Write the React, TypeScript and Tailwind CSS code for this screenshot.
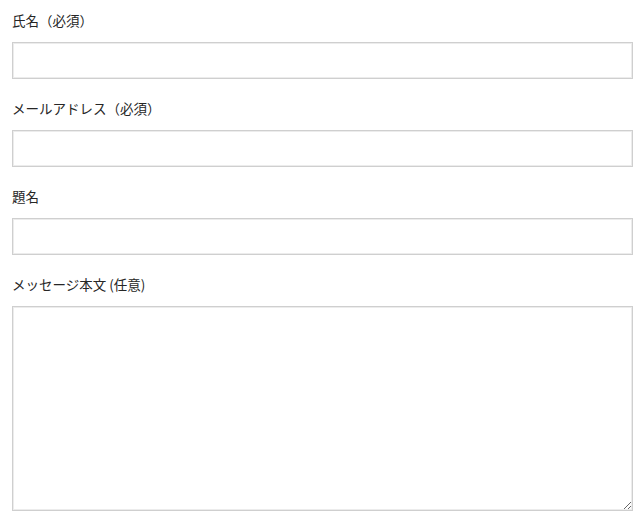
const fields = [
  { label: "氏名（必須）", type: "text" },
  { label: "メールアドレス（必須）", type: "email" },
  { label: "題名", type: "text" },
];

export default function App() {
  return (
    <div
      className="min-h-[518px] bg-white pl-3 pr-[7px] pt-2 text-[13.5px] text-[#262626]"
      style={{ fontFamily: '"Noto Sans CJK JP", "Noto Sans", sans-serif' }}
    >
      <form className="flex flex-col">
        {fields.map((f, i) => (
          <div key={i} className="mb-[17px] flex flex-col">
            <label className="mb-[10px] h-6 leading-6">{f.label}</label>
            <input
              type={f.type}
              className="h-[37px] w-full border border-[#cfcfcf] bg-white px-2 shadow-[inset_0_0_0_1px_#ececec] outline-none"
            />
          </div>
        ))}
        <div className="flex flex-col">
          <label className="mb-[10px] h-6 leading-6">メッセージ本文 (任意)</label>
          <textarea className="h-[205px] w-full border border-[#cfcfcf] bg-white p-2 shadow-[inset_0_0_0_1px_#ececec] outline-none" />
        </div>
      </form>
    </div>
  );
}
